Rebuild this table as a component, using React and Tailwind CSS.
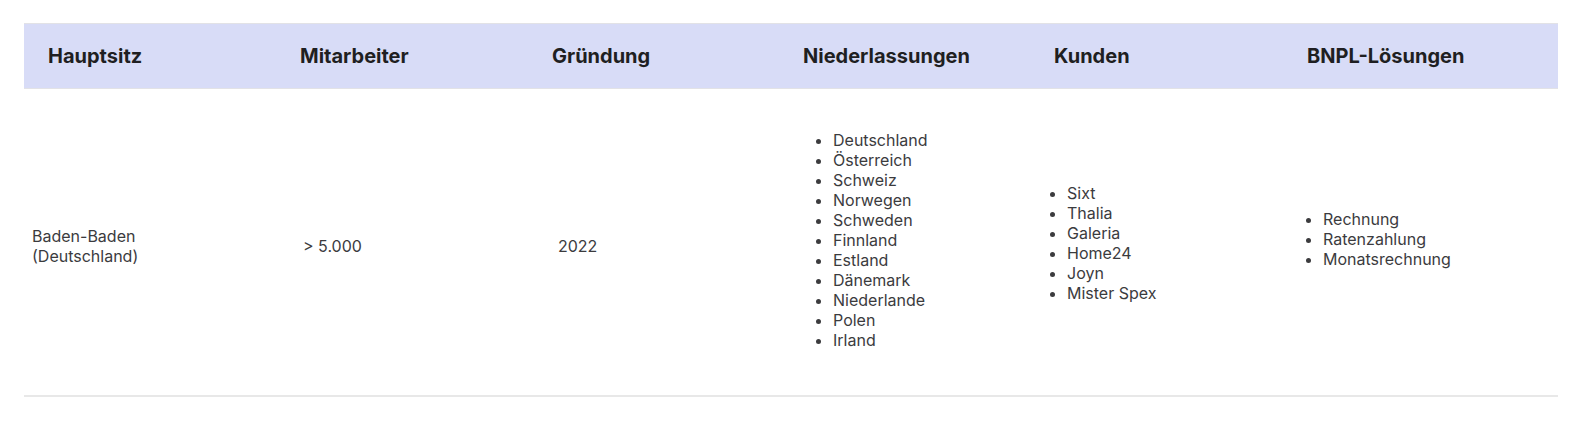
const niederlassungen = [
  "Deutschland",
  "Österreich",
  "Schweiz",
  "Norwegen",
  "Schweden",
  "Finnland",
  "Estland",
  "Dänemark",
  "Niederlande",
  "Polen",
  "Irland",
]

const kunden = ["Sixt", "Thalia", "Galeria", "Home24", "Joyn", "Mister Spex"]

const bnpl = ["Rechnung", "Ratenzahlung", "Monatsrechnung"]

function BulletList({ items }) {
  return (
    <ul className="list-disc pl-0 m-0">
      {items.map((item) => (
        <li key={item} className="leading-5">
          {item}
        </li>
      ))}
    </ul>
  )
}

export default function App() {
  const headers = [
    "Hauptsitz",
    "Mitarbeiter",
    "Gründung",
    "Niederlassungen",
    "Kunden",
    "BNPL-Lösungen",
  ]

  return (
    <div className="min-h-[421px] bg-white px-6 pt-[23px] font-['Inter','Noto_Sans',sans-serif]">
      <table className="w-[1534px] table-fixed border-collapse">
        <colgroup>
          <col className="w-[252px]" />
          <col className="w-[252px]" />
          <col className="w-[251px]" />
          <col className="w-[251px]" />
          <col className="w-[253px]" />
          <col className="w-[275px]" />
        </colgroup>
        <thead>
          <tr className="bg-[#d8dcf7] border-y border-[#e2e2e6]">
            {headers.map((h) => (
              <th
                key={h}
                className="text-left pl-6 py-[18px] text-xl leading-7 font-bold text-[#1f1f22]"
              >
                {h}
              </th>
            ))}
          </tr>
        </thead>
        <tbody className="text-base leading-5 text-[#3b3b3e]">
          <tr className="border-b-2 border-[#e8e8e8]">
            <td className="align-middle pl-2 pt-2 leading-5">
              Baden-Baden
              <br />
              (Deutschland)
            </td>
            <td className="align-middle pl-[27px] pt-2">&gt; 5.000</td>
            <td className="align-middle pl-[30px] pt-2">2022</td>
            <td className="align-middle pl-[54px] pt-[41px] pb-[45px]">
              <BulletList items={niederlassungen} />
            </td>
            <td className="align-middle pl-[37px] pt-[2px]">
              <BulletList items={kunden} />
            </td>
            <td className="align-middle pl-[40px] pb-[6px]">
              <BulletList items={bnpl} />
            </td>
          </tr>
        </tbody>
      </table>
    </div>
  )
}
